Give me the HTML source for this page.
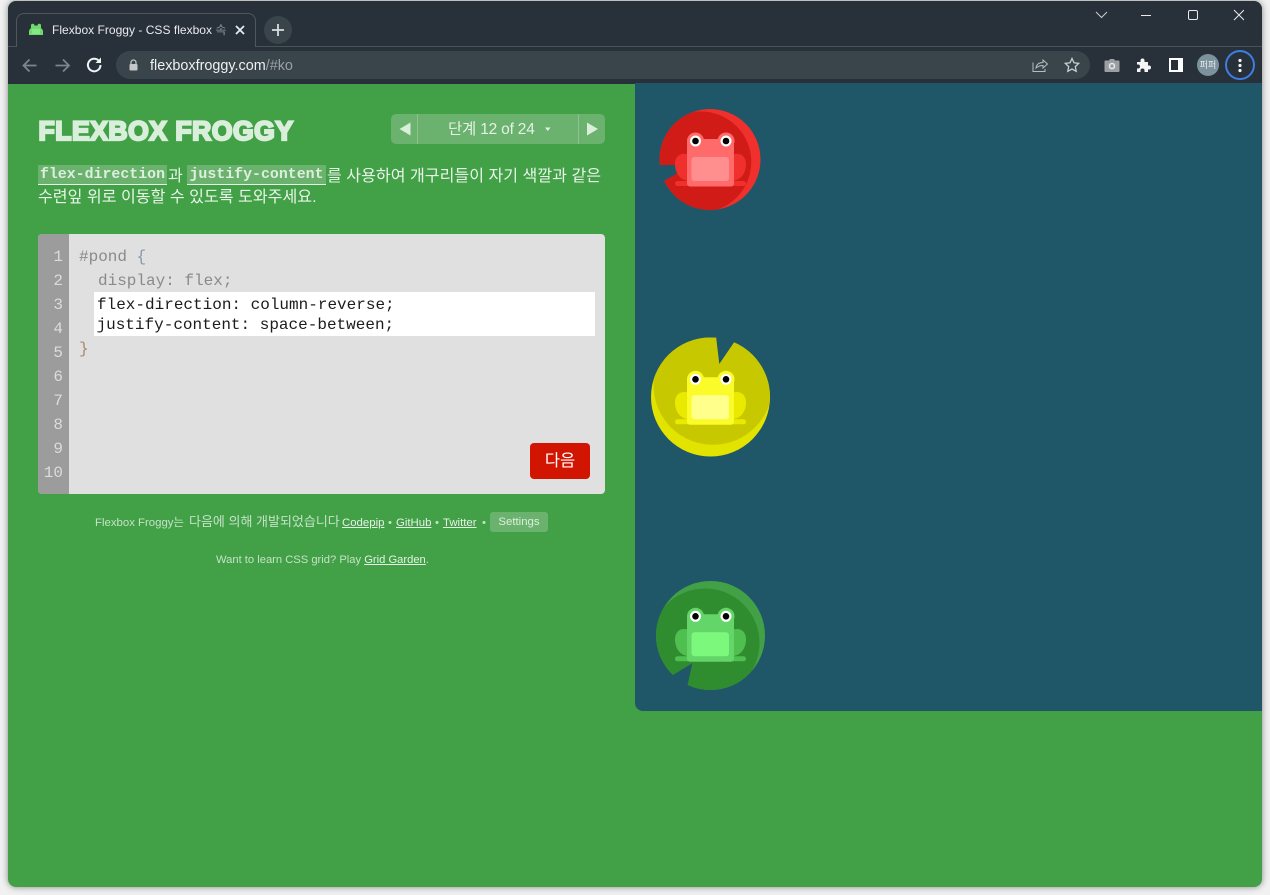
<!DOCTYPE html>
<html lang="ko"><head><meta charset="utf-8"><title>Flexbox Froggy</title>
<style>
html,body{margin:0;padding:0;width:1270px;height:895px;overflow:hidden;background:#f1f1f1}
body{position:relative;font-family:"Liberation Sans","Noto Sans CJK KR",sans-serif}
.a{position:absolute;white-space:nowrap;line-height:1}
#win{position:absolute;left:8px;top:1px;width:1254px;height:886px;border-radius:8px;overflow:hidden;background:#42a047;box-shadow:0 0 7px rgba(0,0,0,.45)}
#chrome{position:absolute;background:#28313a}
#tabline{position:absolute;left:8px;top:46px;width:1254px;height:1px;background:#4a5157}
#tab{position:absolute;left:16px;top:13px;width:240px;height:34px;box-sizing:border-box;border:1px solid #4f565c;border-bottom:none;border-radius:8px 8px 0 0;background:#28313a}
#url{position:absolute;left:116px;top:51px;width:974px;height:28px;border-radius:14px;background:#3a444b}
#pond{position:absolute;left:635px;top:83px;width:627px;height:628px;background:#1f5768;border-bottom-left-radius:8px}
#sel{position:absolute;left:391px;top:114px;width:214px;height:30px;border-radius:5px;background:#6ab26e}
#ed{position:absolute;left:38px;top:234px;width:567px;height:260px;background:#e0e0e0;border-radius:4px;overflow:hidden}
#gut{position:absolute;left:0;top:0;width:31px;height:260px;background:#9c9c9c}
.n{position:absolute;right:6px;width:24px;text-align:right;font:16px/24px "Liberation Mono",monospace;color:#dcdcdc}
.c{position:absolute;font:16px/24px "Liberation Mono",monospace;white-space:pre;color:#8a8a8a}
.code{position:absolute;top:165px;height:19px;background:#6ab26e;border-bottom:1px solid #e6f3e7;font:bold 14.9px/21px "Liberation Mono",monospace;color:#dcefdd;text-align:center;overflow:hidden}
.ko{color:#e8f5e9;font-size:16.100px}
.ft{color:#c5e2c7;font-size:11.4px}
.ft u{color:#e5f3e6}
</style></head><body>
<div id="win"></div>
<div id="chrome" style="left:8px;top:1px;width:1254px;height:83px;border-radius:8px 8px 0 0"></div>
<div id="tabline"></div>
<div style="position:absolute;left:8px;top:47px;width:1254px;height:36px;background:#28313a"></div>
<div id="tab"></div>
<svg class="a" style="left:28px;top:23px" width="16" height="13" viewBox="0 0 16 13"><path d="M1 12V8c0-1 1-2 2-3V2.500a1.700 1.700 0 0 1 3.400 0h3.200a1.700 1.700 0 0 1 3.400 0V5c1 1 2 2 2 3v4z" fill="#6fd96f"/><rect x="4" y="6" width="8" height="5" fill="#84e884"/></svg>
<div class="a" style="left:52px;top:23px;font-size:12.050px;color:#e8eaed;width:176px;overflow:hidden;line-height:14px">Flexbox Froggy - CSS flexbox <span style="color:#8d9499">속</span></div>
<svg class="a" style="left:235px;top:25px" width="10" height="10" viewBox="0 0 10 10"><path d="M1 1l8 8M9 1l-8 8" stroke="#e8eaed" stroke-width="1.800"/></svg>
<div class="a" style="left:264px;top:16px;width:28px;height:28px;border-radius:14px;background:#3a444b"></div>
<svg class="a" style="left:271px;top:23px" width="14" height="14" viewBox="0 0 14 14"><path d="M7 1v12M1 7h12" stroke="#d9dde0" stroke-width="1.800"/></svg>
<!-- window controls -->
<svg class="a" style="left:1094px;top:9px" width="150" height="14" viewBox="0 0 150 14"><path d="M2 3l5.500 5.500L13 3" fill="none" stroke="#c9cdd0" stroke-width="1"/><path d="M47 6.500h10" stroke="#e8eaed" stroke-width="1"/><rect x="94.500" y="1.500" width="9" height="9" rx="1.500" fill="none" stroke="#e8eaed" stroke-width="1"/><path d="M140 1l10 10M150 1l-10 10" stroke="#e8eaed" stroke-width="1"/></svg>
<!-- nav -->
<svg class="a" style="left:20px;top:55px" width="84" height="20" viewBox="0 0 84 20"><path d="M16.500 10.500H4M9.500 4.500L3.500 10.500l6 6" fill="none" stroke="#7d858b" stroke-width="1.800"/><path d="M35.500 10.500h12.500M43 4.500l6 6-6 6" fill="none" stroke="#7d858b" stroke-width="1.800"/><path d="M80.500 10a6.300 6.300 0 1 1-1.800-4.400" fill="none" stroke="#f1f3f4" stroke-width="2"/><path d="M81 2.500v5.500h-5.500z" fill="#f1f3f4"/></svg>
<div id="url"></div>
<svg class="a" style="left:129px;top:59px" width="9" height="12" viewBox="0 0 9 12"><path d="M2 5V3.500a2.500 2.500 0 0 1 5 0V5" fill="none" stroke="#c4c8cb" stroke-width="1.200"/><rect x="0.500" y="5" width="8" height="6.500" rx="1" fill="#c4c8cb"/></svg>
<div class="a" style="left:150px;top:58px;font-size:14.400px;line-height:16px;color:#eef0f1">flexboxfroggy.com<span style="color:#9aa0a6">/#ko</span></div>
<svg class="a" style="left:1032px;top:57px" width="50" height="16" viewBox="0 0 50 16"><path d="M1 5.500V14.500H13V12" fill="none" stroke="#b7bcc0" stroke-width="1"/><path d="M4 11c.5-3.500 3-5.500 7-5.500V3l4.500 4-4.500 4V8.500c-3 0-5 .8-7 2.500z" fill="none" stroke="#b7bcc0" stroke-width="1"/><path d="M40 1.500l2 4.300 4.700.6-3.400 3.200.9 4.700-4.200-2.300-4.200 2.300.9-4.700-3.400-3.200 4.700-.6z" fill="none" stroke="#c9cdd0" stroke-width="1.300"/></svg>
<svg class="a" style="left:1104px;top:58px" width="16" height="14" viewBox="0 0 16 14"><path d="M1.500 2.500H5L6 1h4l1 1.500h3.500a1 1 0 0 1 1 1V13a1 1 0 0 1-1 1h-13a1 1 0 0 1-1-1V3.500a1 1 0 0 1 1-1z" fill="#9a9fa3"/><circle cx="8" cy="8" r="3.300" fill="#e8e8e8"/><circle cx="8" cy="8" r="1.800" fill="#9a9fa3"/></svg>
<svg class="a" style="left:1136px;top:57px" width="16" height="16" viewBox="0 0 16 16"><path d="M1 5h3.500V3.500a2 2 0 0 1 4 0V5H12v3.500h1a2 2 0 0 1 0 4h-1V15H8.500v-1.500a2 2 0 0 0-4 0V15H1v-3.500h1a2 2 0 0 0 0-4H1z" fill="#f4f5f5"/></svg>
<svg class="a" style="left:1169px;top:58px" width="14" height="14" viewBox="0 0 14 14"><rect width="14" height="14" fill="#fff"/><rect x="2" y="2" width="7" height="10" fill="#28313a"/></svg>
<div class="a" style="left:1197px;top:54px;width:22px;height:22px;border-radius:11px;background:#7c929c;color:#e9edef;font-size:9px;line-height:22px;text-align:center">퍼퍼</div>
<div class="a" style="left:1225px;top:50px;width:26px;height:26px;border:2px solid #3d7fe0;border-radius:15px"></div>
<svg class="a" style="left:1238px;top:58px" width="4" height="15" viewBox="0 0 4 15"><circle cx="2" cy="2.500" r="1.600" fill="#f1f3f4"/><circle cx="2" cy="7.500" r="1.600" fill="#f1f3f4"/><circle cx="2" cy="12.500" r="1.600" fill="#f1f3f4"/></svg>

<!-- page -->
<div class="a" style="left:38.500px;top:117px;font-size:26.500px;line-height:28px;font-weight:bold;color:#d9eedb;-webkit-text-stroke:2.200px #d9eedb;letter-spacing:.55px">FLEXBOX FROGGY</div>

<div id="sel"></div>
<div class="a" style="left:417px;top:114px;width:1px;height:30px;background:#8cc48f"></div>
<div class="a" style="left:578px;top:114px;width:1px;height:30px;background:#8cc48f"></div>
<svg class="a" style="left:399px;top:122px" width="200" height="14" viewBox="0 0 200 14"><path d="M11.500 .5L.5 7l11 6.500z" fill="#d9eedb"/><path d="M188 .5L199 7l-11 6.500z" fill="#d9eedb"/><path d="M146 5.500h5.500l-2.750 3.500z" fill="#e4f2e5"/></svg>
<div class="a" style="left:448px;top:121px;font-size:15.500px;line-height:17px;color:#e4f2e5;letter-spacing:-.2px">단계 12 of 24</div>

<div class="code" style="left:38px;width:129px">flex-direction</div>
<div class="a ko" style="left:168px;top:167px;line-height:18px">과</div>
<div class="code" style="left:187px;width:139px">justify-content</div>
<div class="a ko" style="left:327px;top:167px;line-height:18px">를 사용하여 개구리들이 자기 색깔과 같은</div>
<div class="a ko" style="left:38px;top:188px;line-height:18px">수련잎 위로 이동할 수 있도록 도와주세요.</div>

<div id="ed">
  <div id="gut">
    <div class="n" style="top:11px">1</div><div class="n" style="top:35px">2</div><div class="n" style="top:59px">3</div><div class="n" style="top:83px">4</div><div class="n" style="top:107px">5</div><div class="n" style="top:131px">6</div><div class="n" style="top:155px">7</div><div class="n" style="top:179px">8</div><div class="n" style="top:203px">9</div><div class="n" style="top:227px">10</div>
  </div>
  <div class="c" style="left:41px;top:11px">#pond <span style="color:#8a98a8">{</span></div>
  <div class="c" style="left:60px;top:35px">display: flex;</div>
  <div style="position:absolute;left:56px;top:58px;width:501px;height:44px;background:#fff"></div>
  <div class="c" style="left:59px;top:59px;color:#1c1c1c;line-height:24px">flex-direction: column-reverse;</div>
  <div class="c" style="left:58.500px;top:79px;color:#1c1c1c;line-height:24px">justify-content: space-between;</div>
  <div class="c" style="left:41px;top:103px;color:#a88a70">}</div>
  <div style="position:absolute;left:492px;top:209px;width:60px;height:36px;border-radius:4px;background:#d11500;color:#fff;font-size:16.500px;line-height:36px;text-align:center">다음</div>
</div>

<div class="a ft" style="left:95px;top:516px;line-height:14px">Flexbox Froggy는</div>
<div class="a ft" style="left:189px;top:515px;line-height:14px;font-size:13px">다음에 의해 개발되었습니다</div>
<div class="a ft" style="left:342px;top:516px;line-height:14px"><u>Codepip</u></div>
<div class="a ft" style="left:388px;top:516px;line-height:14px">•</div>
<div class="a ft" style="left:396px;top:516px;line-height:14px"><u>GitHub</u></div>
<div class="a ft" style="left:435px;top:516px;line-height:14px">•</div>
<div class="a ft" style="left:443px;top:516px;line-height:14px"><u>Twitter</u></div>
<div class="a ft" style="left:482px;top:516px;line-height:14px">•</div>
<div class="a" style="left:490px;top:512px;width:58px;height:20px;border-radius:3px;background:#6ab26e;color:#dcefdd;font-size:11.400px;line-height:21px;text-align:center">Settings</div>
<div class="a ft" style="left:216px;top:553px;line-height:14px;font-size:11.200px">Want to learn CSS grid? Play <u>Grid Garden</u>.</div>

<div id="pond"></div>
<svg class="a" style="left:0;top:0" width="1270" height="895" viewBox="0 0 1270 895">
<defs>
  <clipPath id="cr"><circle cx="710" cy="159.500" r="50.500"/></clipPath>
  <clipPath id="cy"><circle cx="710.500" cy="397" r="59.500"/></clipPath>
  <clipPath id="cg"><circle cx="710.500" cy="635.500" r="54.500"/></clipPath>
</defs>
<!-- red pad -->
<circle cx="710" cy="159.500" r="50.500" fill="#f0302d"/>
<circle cx="700.800" cy="161.900" r="50.500" fill="#d01b16" clip-path="url(#cr)"/>
<path d="M655 165H692.300L660 183z" fill="#1f5768"/>
<!-- yellow pad -->
<circle cx="710.500" cy="397" r="59.500" fill="#e3e300"/>
<circle cx="713" cy="385.300" r="59.500" fill="#c8c800" clip-path="url(#cy)"/>
<path d="M715.500 332L719.300 364L737 338z" fill="#1f5768"/>
<!-- green pad -->
<circle cx="710.500" cy="635.500" r="54.500" fill="#42a047"/>
<circle cx="705" cy="643" r="54.500" fill="#2f8c2f" clip-path="url(#cg)"/>
<path d="M668 678L692.300 663.300L686.500 690z" fill="#1f5768"/>

<!-- red frog -->
<g>
  <path d="M690 155C680 151 675 157 675 164C675 174 681 181 690 181Z" fill="#f0302d"/><path d="M731 155C741 151 746 157 746 164C746 174 740 181 731 181Z" fill="#f0302d"/>
  <rect x="675" y="181" width="71" height="5" rx="2.500" fill="#f0302d"/>
  <circle cx="695.500" cy="141" r="8.500" fill="#ff6b6b"/><circle cx="726" cy="141" r="8.500" fill="#ff6b6b"/>
  <rect x="687" y="139" width="47" height="47.500" rx="3" fill="#ff6b6b"/>
  <rect x="691.500" y="157" width="37.500" height="24" rx="3" fill="#ff8f8f"/>
  <circle cx="695.500" cy="141" r="5.500" fill="#fff"/><circle cx="726" cy="141" r="5.500" fill="#fff"/>
  <circle cx="695.500" cy="141" r="3.300" fill="#000"/><circle cx="726" cy="141" r="3.300" fill="#000"/>
</g>
<!-- yellow frog -->
<g transform="translate(0,238.300)">
  <path d="M690 155C680 151 675 157 675 164C675 174 681 181 690 181Z" fill="#eaea00"/><path d="M731 155C741 151 746 157 746 164C746 174 740 181 731 181Z" fill="#eaea00"/>
  <rect x="675" y="181" width="71" height="5" rx="2.500" fill="#eaea00"/>
  <circle cx="695.500" cy="141" r="8.500" fill="#fbfb2a"/><circle cx="726" cy="141" r="8.500" fill="#fbfb2a"/>
  <rect x="687" y="139" width="47" height="47.500" rx="3" fill="#fbfb2a"/>
  <rect x="691.500" y="157" width="37.500" height="24" rx="3" fill="#ffff8c"/>
  <circle cx="695.500" cy="141" r="5.500" fill="#fff"/><circle cx="726" cy="141" r="5.500" fill="#fff"/>
  <circle cx="695.500" cy="141" r="3.300" fill="#000"/><circle cx="726" cy="141" r="3.300" fill="#000"/>
</g>
<!-- green frog -->
<g transform="translate(0,475.300)">
  <path d="M690 155C680 151 675 157 675 164C675 174 681 181 690 181Z" fill="#4fc050"/><path d="M731 155C741 151 746 157 746 164C746 174 740 181 731 181Z" fill="#4fc050"/>
  <rect x="675" y="181" width="71" height="5" rx="2.500" fill="#4fc050"/>
  <circle cx="695.500" cy="141" r="8.500" fill="#64d568"/><circle cx="726" cy="141" r="8.500" fill="#64d568"/>
  <rect x="687" y="139" width="47" height="47.500" rx="3" fill="#64d568"/>
  <rect x="691.500" y="157" width="37.500" height="24" rx="3" fill="#7cf97c"/>
  <circle cx="695.500" cy="141" r="5.500" fill="#fff"/><circle cx="726" cy="141" r="5.500" fill="#fff"/>
  <circle cx="695.500" cy="141" r="3.300" fill="#000"/><circle cx="726" cy="141" r="3.300" fill="#000"/>
</g>
</svg>
</body></html>
